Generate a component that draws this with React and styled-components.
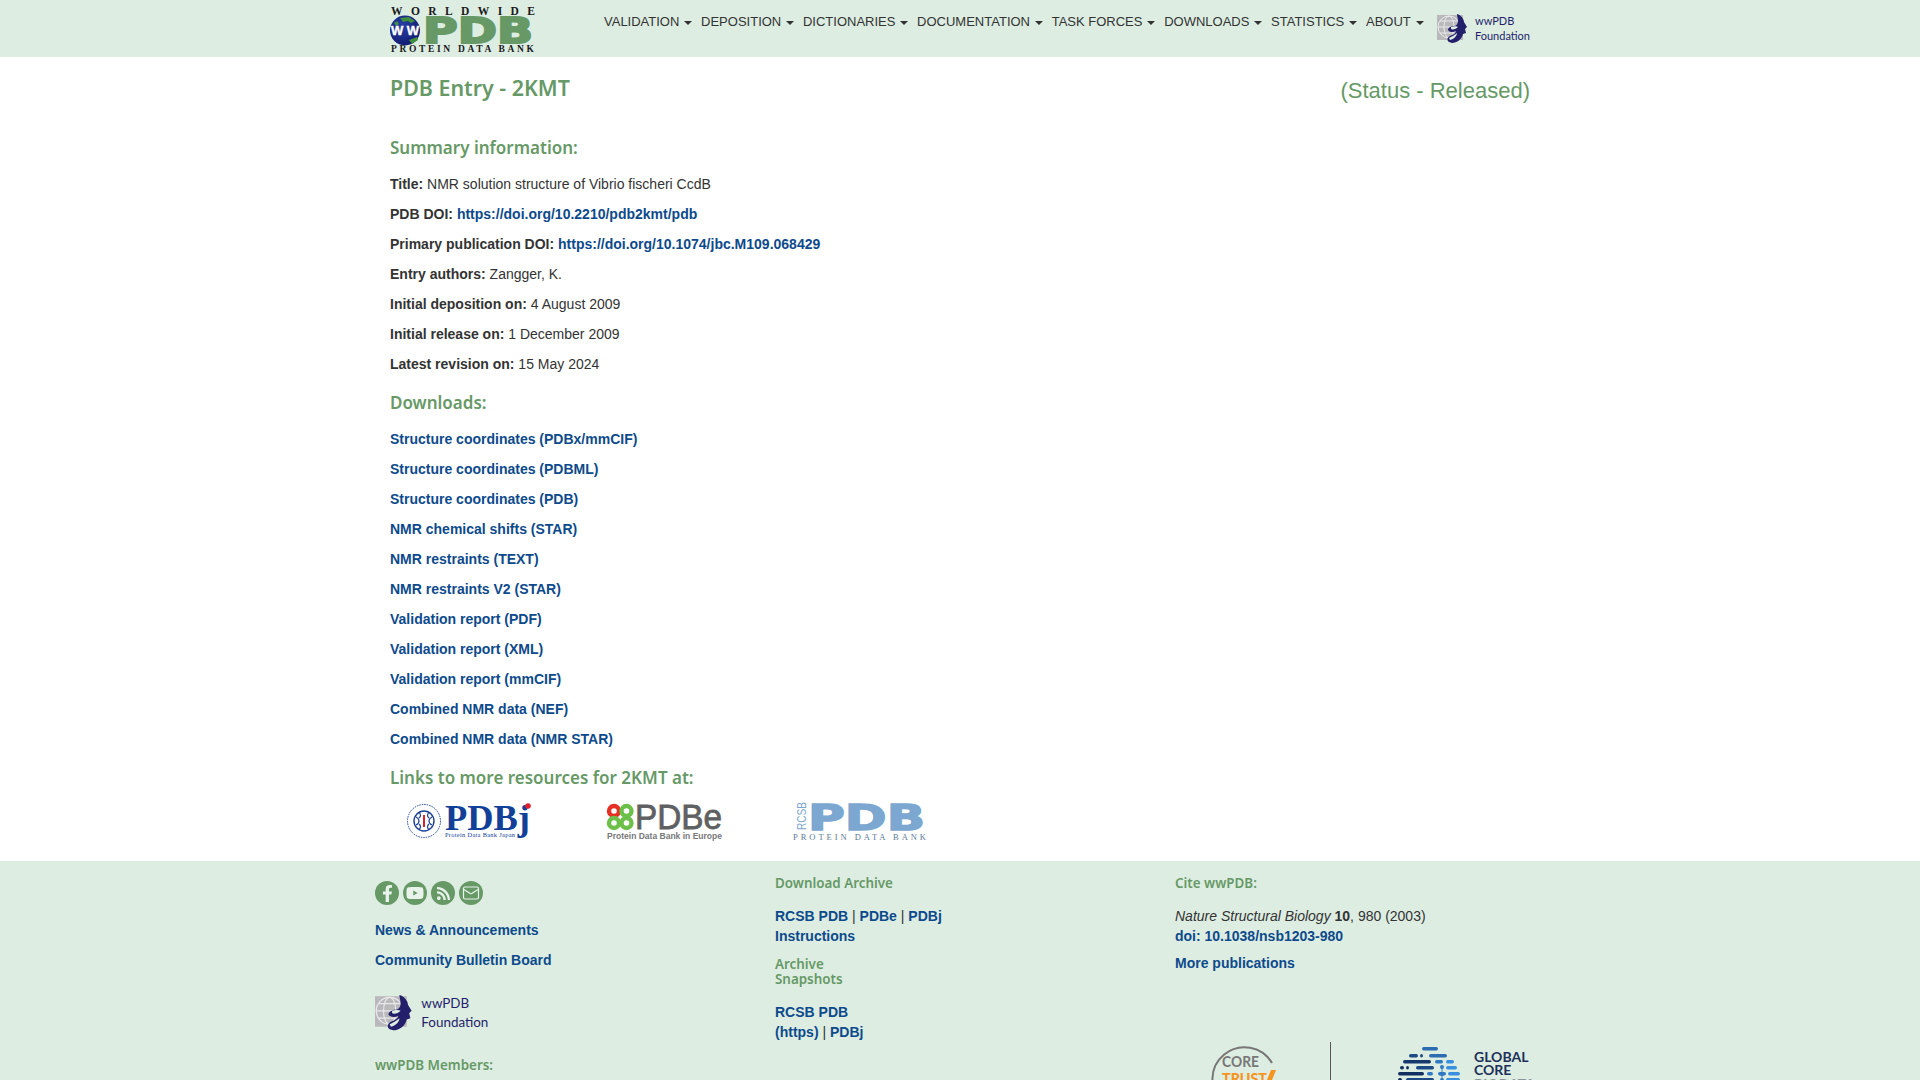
import React from 'react';
import styled, { createGlobalStyle } from 'styled-components';
import { FaFacebookF, FaYoutube, FaRss } from 'react-icons/fa';
import { Mail } from 'lucide-react';

const GREEN = '#669966';
const LINK = '#0d4a8c';
const TINT = '#ddede2';

const GlobalStyle = createGlobalStyle`
  html, body {
    margin: 0;
    height: 100%;
    overflow: hidden;
    background: #fff;
  }
  body {
    font-family: "Liberation Sans", Arial, sans-serif;
    font-size: 14px;
    line-height: 20px;
    color: #333;
  }
  svg {
    display: block;
    overflow: visible;
  }
`;

// Header
const Header = styled.header`
  background: ${TINT};
  height: 57px;
`;

const HeaderInner = styled.div`
  width: 1140px;
  margin: 0 auto;
  display: flex;
  align-items: flex-start;
`;

const Nav = styled.nav`
  display: flex;
  gap: 8.7px;
  margin-left: 66px;
  padding-top: 12px;
`;

const NavItem = styled.a`
  font-size: 13px;
  color: #333;
  white-space: nowrap;
  &::after {
    content: '';
    display: inline-block;
    margin-left: 5px;
    vertical-align: middle;
    border-top: 4px solid #333;
    border-left: 4px solid transparent;
    border-right: 4px solid transparent;
  }
`;

const HeaderFoundation = styled.div`
  margin-left: auto;
  padding-top: 14px;
`;

// Main content
const Main = styled.main`
  width: 1140px;
  margin: 0 auto;
  padding: 18px 0 16px;
`;

const TitleRow = styled.div`
  display: flex;
  justify-content: space-between;
  align-items: flex-start;
  height: 26px;
`;

const PageTitle = styled.h1`
  margin: 0;
  font-family: "Noto Sans", sans-serif;
  font-size: 21.4px;
  line-height: 26px;
  font-weight: 600;
  color: ${GREEN};
`;

const Status = styled.div`
  font-size: 22px;
  line-height: 32px;
  color: ${GREEN};
`;

const SectionTitle = styled.h3`
  margin: ${p => p.$top}px 0 14px;
  font-family: "Noto Sans", sans-serif;
  font-size: 17px;
  line-height: 24px;
  font-weight: 600;
  color: ${GREEN};
`;

const Row = styled.p`
  margin: 0 0 10px;
`;

const Label = styled.b`
  font-weight: 700;
`;

const Link = styled.a`
  color: ${LINK};
  font-weight: 700;
  text-decoration: none;
`;

const Resources = styled.div`
  display: grid;
  grid-template-columns: 200px 186px 134px;
  padding-left: 17px;
  margin-top: -5px;
  height: 46px;
  align-items: center;
`;

// Footer
const Footer = styled.footer`
  background: ${TINT};
  height: 400px;
`;

const FooterGrid = styled.div`
  width: 1170px;
  margin: 0 auto;
  display: grid;
  grid-template-columns: 400px 400px 370px;
`;

const FooterCol = styled.div`
  padding-top: ${p => p.$top}px;
`;

const SocialRow = styled.div`
  display: flex;
  gap: 4px;
  margin-bottom: 15px;
`;

const Social = styled.a`
  width: 24px;
  height: 24px;
  border-radius: 50%;
  background: ${GREEN};
  color: #e9f3ec;
  display: flex;
  align-items: center;
  justify-content: center;
`;

const FootFoundation = styled.div`
  margin: 25px 0 24px;
`;

const FootTitle = styled.h4`
  margin: 0 0 ${p => p.$after ?? 14}px;
  font-family: "Noto Sans", sans-serif;
  font-size: 13.4px;
  line-height: ${p => p.$line ?? 18}px;
  font-weight: 600;
  color: ${GREEN};
`;

const Lines = styled.div`
  margin-bottom: ${p => p.$after ?? 0}px;
`;

const Trust = styled.div`
  display: flex;
  align-items: flex-start;
  margin-top: 69px;
  padding-left: 37px;
`;

const Divider = styled.div`
  width: 1px;
  height: 60px;
  background: #555;
  margin: 0 67px 0 50px;
`;

// Logos
const PdbLogo = () => (
  <svg width="148" height="57" viewBox="0 0 148 57">
    <defs>
      <radialGradient id="globe" cx="0.4" cy="0.35" r="0.7">
        <stop offset="0" stopColor="#2a3fa8" />
        <stop offset="1" stopColor="#101a6e" />
      </radialGradient>
    </defs>
    <text x="1" y="15" fontFamily="Liberation Serif" fontWeight="700" fontSize="11.5" textLength="144" fill="#1a1a1a">WORLDWIDE</text>
    <circle cx="15" cy="30.5" r="15" fill="url(#globe)" />
    <path d="M10 18l9-1 6 4-4 2-3-2-5 1zM4 23l3-2 2 3-3 2zM19 40l8-3 1 3-6 4z" fill="#3f8f3f" />
    <text x="15" y="35" textAnchor="middle" fontFamily="Liberation Sans" fontWeight="700" fontSize="13" fill="#fff" stroke="#fff" strokeWidth="0.4" textLength="28">WW</text>
    <text x="33" y="43" fontFamily="DejaVu Sans" fontWeight="700" fontSize="36" textLength="110" lengthAdjust="spacingAndGlyphs" fill="#669966" stroke="#669966" strokeWidth="2">PDB</text>
    <text x="1" y="52" fontFamily="Liberation Serif" fontWeight="700" fontSize="9.5" textLength="143" fill="#1a1a1a">PROTEIN DATA BANK</text>
  </svg>
);

const FoundationLogo = ({ scale = 1 }) => (
  <svg width={93 * scale} height={30 * scale} viewBox="0 0 93 30">
    <rect x="0" y="1" width="26" height="25" fill="#b9b9bb" />
    <g fill="none" stroke="#e9e9ea" strokeWidth="1">
      <circle cx="12" cy="13" r="11" />
      <ellipse cx="12" cy="13" rx="5" ry="11" />
      <path d="M1 13h22M3 7h18M3 19h18" />
    </g>
    <path d="M20 0c4 1 7 5 7 8l3 5-2 2 1 4-3 1c-1 5-6 9-11 9l-3-1c-3-2-1-5 1-6 3-1 6-3 6-5-3 2-7 1-8-1 0-2 3-4 6-4 2 0 4-2 4-5 0-2-1-5-1-7z" fill="#241f6b" />
    <path d="M14 13c2-1 6-1 7 0-2 2-5 3-7 2zM12 24c2-1 6-3 8-5 0 3-3 6-7 7z" fill="#ddede2" />
    <text x="38" y="11" fontFamily="Lato" fontSize="11" fill="#241f6b">wwPDB</text>
    <text x="38" y="26" fontFamily="Lato" fontSize="11" fill="#241f6b">Foundation</text>
  </svg>
);

const PdbjLogo = () => (
  <svg width="126" height="40" viewBox="0 0 126 40">
    <circle cx="17" cy="19" r="16.5" fill="none" stroke="#1c3f94" strokeWidth="1" strokeDasharray="1.5 1" />
    <circle cx="17" cy="19" r="10" fill="none" stroke="#1c3f94" strokeWidth="1.4" />
    <path d="M9 15c4 2 4 6 0 8M25 15c-4 2-4 6 0 8M12 10c2 3 2 4 0 6M22 10c-2 3-2 4 0 6M12 28c2-3 2-4 0-6M22 28c-2-3-2-4 0-6" fill="none" stroke="#1c3f94" strokeWidth="1.2" />
    <rect x="16" y="13" width="2" height="12" fill="#d8232a" />
    <text x="38" y="28" fontFamily="Liberation Serif" fontWeight="700" fontSize="36" textLength="85" lengthAdjust="spacingAndGlyphs" fill="#123f98">PDBj</text>
    <circle cx="121" cy="4" r="2.8" fill="#e0202a" />
    <text x="38" y="35" fontFamily="Liberation Serif" fontSize="6.4" textLength="70" fill="#123f98">Protein Data Bank Japan</text>
  </svg>
);

const PdbeLogo = () => (
  <svg width="116" height="38" viewBox="0 0 116 38">
    <g fill="none" strokeWidth="4.4">
      <circle cx="7" cy="8" r="5" stroke="#e63026" />
      <circle cx="19.5" cy="8" r="5" stroke="#6cc04a" />
      <circle cx="7" cy="20" r="5" stroke="#6cc04a" />
      <circle cx="19.5" cy="20" r="5" stroke="#6cc04a" />
    </g>
    <text x="28" y="26" fontFamily="Liberation Sans" fontWeight="400" fontSize="35" textLength="87" lengthAdjust="spacingAndGlyphs" fill="#5f6062" stroke="#5f6062" strokeWidth="0.8">PDBe</text>
    <text x="0" y="36" fontFamily="Liberation Sans" fontWeight="700" fontSize="9" textLength="115" lengthAdjust="spacingAndGlyphs" fill="#77787a">Protein Data Bank in Europe</text>
  </svg>
);

const RcsbLogo = () => (
  <svg width="134" height="40" viewBox="0 0 134 40">
    <text transform="translate(13 28) rotate(-90)" fontFamily="Liberation Sans" fontSize="13" textLength="28" lengthAdjust="spacingAndGlyphs" fill="#7ba7d0">RCSB</text>
    <text x="15" y="28" fontFamily="DejaVu Sans" fontWeight="700" fontSize="35" textLength="117" lengthAdjust="spacingAndGlyphs" fill="#7ba7d0" stroke="#7ba7d0" strokeWidth="1.4">PDB</text>
    <text x="0" y="38" fontFamily="Liberation Serif" fontSize="8.5" textLength="133" fill="#5d7a96">PROTEIN DATA BANK</text>
  </svg>
);

const CoreTrustLogo = () => (
  <svg width="68" height="66" viewBox="0 0 68 66">
    <path d="M11 61A32 32 0 1 1 60 21" fill="none" stroke="#777" strokeWidth="2" />
    <text x="10" y="25" fontFamily="Lato" fontWeight="700" fontSize="15" textLength="37" lengthAdjust="spacingAndGlyphs" fill="#777">CORE</text>
    <text x="10" y="42" fontFamily="Lato" fontWeight="900" fontSize="15" textLength="45" lengthAdjust="spacingAndGlyphs" fill="#f7941d">TRUST</text>
    <path d="M59 28h5l-8 20h-5z" fill="#f7941d" />
  </svg>
);

// bars of the biodata dome: x, y, width, colour
const bars = [
  [24, 0, 16, '#2c6cb0'], [11, 7, 9, '#1d4a85'], [22, 7, 3, '#1d4a85'], [31, 7, 18, '#2c6cb0'],
  [5, 13, 28, '#16386c'], [37, 13, 8, '#2f78c4'], [48, 13, 8, '#3a8fe0'], [2, 19, 4, '#14305f'],
  [8, 19, 3, '#14305f'], [18, 19, 18, '#1d4a85'], [48, 19, 11, '#3a8fe0'], [0, 25, 26, '#12305f'],
  [29, 25, 6, '#2f78c4'], [40, 25, 8, '#2f78c4'], [50, 25, 12, '#3a8fe0'], [0, 31, 4, '#12305f'],
  [8, 31, 28, '#1d4a85'], [48, 31, 14, '#3a8fe0'],
];

const GlobalCoreLogo = () => (
  <svg width="136" height="60" viewBox="0 0 136 60">
    <g transform="translate(0 5)">
      {bars.map(([x, y, w, c]) => (
        <rect key={`${x}-${y}`} x={x} y={y} width={w} height="3.4" rx="1.7" fill={c} />
      ))}
      <circle cx="44" cy="27" r="2" fill="#2f78c4" />
      <circle cx="44" cy="20" r="2" fill="#2f78c4" />
      <circle cx="44" cy="33" r="2" fill="#2f78c4" />
      <path d="M44 20v13" stroke="#2f78c4" />
    </g>
    <text x="76" y="20" fontFamily="Lato" fontWeight="700" fontSize="14" fill="#1c2f58">GLOBAL</text>
    <text x="76" y="33" fontFamily="Lato" fontWeight="700" fontSize="14" fill="#1c2f58">CORE</text>
    <text x="76" y="47" fontFamily="Lato" fontWeight="700" fontSize="14" fill="#8a949a">BIODATA</text>
  </svg>
);

const navItems = ['VALIDATION', 'DEPOSITION', 'DICTIONARIES', 'DOCUMENTATION', 'TASK FORCES', 'DOWNLOADS', 'STATISTICS', 'ABOUT'];

const summary = [
  ['Title:', 'NMR solution structure of Vibrio fischeri CcdB'],
  ['PDB DOI:', null, 'https://doi.org/10.2210/pdb2kmt/pdb'],
  ['Primary publication DOI:', null, 'https://doi.org/10.1074/jbc.M109.068429'],
  ['Entry authors:', 'Zangger, K.'],
  ['Initial deposition on:', '4 August 2009'],
  ['Initial release on:', '1 December 2009'],
  ['Latest revision on:', '15 May 2024'],
];

const downloads = [
  'Structure coordinates (PDBx/mmCIF)',
  'Structure coordinates (PDBML)',
  'Structure coordinates (PDB)',
  'NMR chemical shifts (STAR)',
  'NMR restraints (TEXT)',
  'NMR restraints V2 (STAR)',
  'Validation report (PDF)',
  'Validation report (XML)',
  'Validation report (mmCIF)',
  'Combined NMR data (NEF)',
  'Combined NMR data (NMR STAR)',
];

const App = () => (
  <>
    <GlobalStyle />
    <Header>
      <HeaderInner>
        <PdbLogo />
        <Nav>
          {navItems.map(item => <NavItem key={item}>{item}</NavItem>)}
        </Nav>
        <HeaderFoundation><FoundationLogo /></HeaderFoundation>
      </HeaderInner>
    </Header>

    <Main>
      <TitleRow>
        <PageTitle>PDB Entry - 2KMT</PageTitle>
        <Status>(Status - Released)</Status>
      </TitleRow>

      <SectionTitle $top={35}>Summary information:</SectionTitle>
      {summary.map(([label, value, href]) => (
        <Row key={label}>
          <Label>{label}</Label> {value}
          {href && <Link href={href}>{href}</Link>}
        </Row>
      ))}

      <SectionTitle $top={17}>Downloads:</SectionTitle>
      {downloads.map(name => (
        <Row key={name}><Link href="#">{name}</Link></Row>
      ))}

      <SectionTitle $top={17}>Links to more resources for 2KMT at:</SectionTitle>
      <Resources>
        <PdbjLogo />
        <PdbeLogo />
        <RcsbLogo />
      </Resources>
    </Main>

    <Footer>
      <FooterGrid>
        <FooterCol $top={20}>
          <SocialRow>
            <Social><FaFacebookF size={17} /></Social>
            <Social><FaYoutube size={18} /></Social>
            <Social><FaRss size={15} /></Social>
            <Social><Mail size={18} strokeWidth={1.6} /></Social>
          </SocialRow>
          <Row><Link href="#">News &amp; Announcements</Link></Row>
          <Row><Link href="#">Community Bulletin Board</Link></Row>
          <FootFoundation><FoundationLogo scale={1.22} /></FootFoundation>
          <FootTitle>wwPDB Members:</FootTitle>
        </FooterCol>

        <FooterCol $top={13}>
          <FootTitle>Download Archive</FootTitle>
          <Lines $after={11}>
            <Link href="#">RCSB PDB</Link> | <Link href="#">PDBe</Link> | <Link href="#">PDBj</Link><br />
            <Link href="#">Instructions</Link>
          </Lines>
          <FootTitle $line={15} $after={15}>Archive<br />Snapshots</FootTitle>
          <Lines>
            <Link href="#">RCSB PDB</Link><br />
            <Link href="#">(https)</Link> | <Link href="#">PDBj</Link>
          </Lines>
        </FooterCol>

        <FooterCol $top={13}>
          <FootTitle>Cite wwPDB:</FootTitle>
          <Lines $after={7}>
            <i>Nature Structural Biology</i> <b>10</b>, 980 (2003)<br />
            <Link href="#">doi: 10.1038/nsb1203-980</Link>
          </Lines>
          <Link href="#">More publications</Link>
          <Trust>
            <CoreTrustLogo />
            <Divider />
            <GlobalCoreLogo />
          </Trust>
        </FooterCol>
      </FooterGrid>
    </Footer>
  </>
);

export default App;
